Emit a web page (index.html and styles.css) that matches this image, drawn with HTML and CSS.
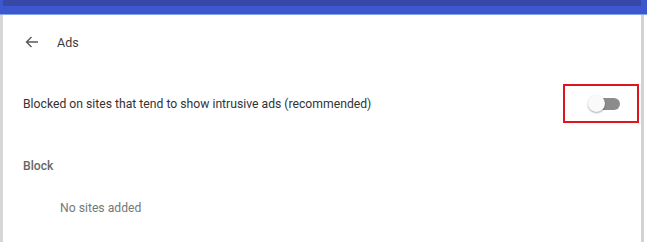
FILE: index.html
```html
<!DOCTYPE html>
<html lang="en">
<head>
    <meta charset="UTF-8">
    <title>Ads</title>
    <link rel="stylesheet" href="styles.css">
</head>
<body>
    <div class="topbar">
        <div class="topbar-inner"></div>
    </div>
    <div class="page">
        <div class="card">
            <div class="header">
                <svg class="back" width="16" height="16" viewBox="0 0 16 16">
                    <path d="M14 8H2.5M7.5 3L2.5 8l5 5" fill="none" stroke="#5a5a5a" stroke-width="1.4"/>
                </svg>
                <span class="title">Ads</span>
            </div>
            <div class="row">
                <span class="row-label">Blocked on sites that tend to show intrusive ads (recommended)</span>
                <div class="highlight">
                    <div class="toggle">
                        <div class="track"></div>
                        <div class="knob"></div>
                    </div>
                </div>
            </div>
            <div class="section">Block</div>
            <div class="empty">No sites added</div>
        </div>
        <div class="scroll"></div>
    </div>
</body>
</html>
```

FILE: styles.css
```css
body {
    margin: 0;
    font-family: Roboto, "Liberation Sans", sans-serif;
    font-size: 12.2px;
    color: #333;
    background-color: #fff;
    overflow: hidden;
}

.topbar {
    height: 14px;
    background-color: #3d58cf;
    border-bottom: 1px solid #86a3e6;
    padding: 0 6px 0 3px;
}

.topbar-inner {
    height: 6px;
    background-color: #3748a9;
}

.page {
    display: flex;
    height: 227px;
}

.card {
    flex: 1;
    border-left: 3px solid #d6d6d6;
    padding-left: 20px;
}

.scroll {
    width: 3px;
    margin-right: 3px;
    background-color: #d2d2d2;
}

.header {
    display: flex;
    align-items: center;
    height: 54px;
}

.back {
    margin-left: 1px;
}

.title {
    margin-left: 17px;
    font-size: 12.5px;
    color: #3c3c3c;
}

.row {
    display: flex;
    align-items: center;
    justify-content: space-between;
    height: 40px;
    margin-top: 15px;
}

.row-label {
    color: #333;
}

.highlight {
    width: 72px;
    height: 35px;
    border: 2px solid #e0141e;
    margin-right: 2px;
    margin-top: -2px;
    display: flex;
    align-items: center;
    justify-content: center;
}

.toggle {
    position: relative;
    width: 34px;
    height: 18px;
    margin-left: 8px;
    margin-top: 2px;
}

.track {
    position: absolute;
    left: 8px;
    top: 3px;
    width: 24px;
    height: 12px;
    border-radius: 6px;
    background-color: #8c8c8c;
}

.knob {
    position: absolute;
    left: 0;
    top: 0;
    width: 17px;
    height: 17px;
    border-radius: 50%;
    background-color: #fafafa;
    box-shadow: 0 1px 2px rgba(0, 0, 0, 0.35);
}

.section {
    margin-top: 35px;
    font-weight: 500;
    color: #666;
}

.empty {
    margin-top: 28px;
    margin-left: 37px;
    color: #777;
}
```
